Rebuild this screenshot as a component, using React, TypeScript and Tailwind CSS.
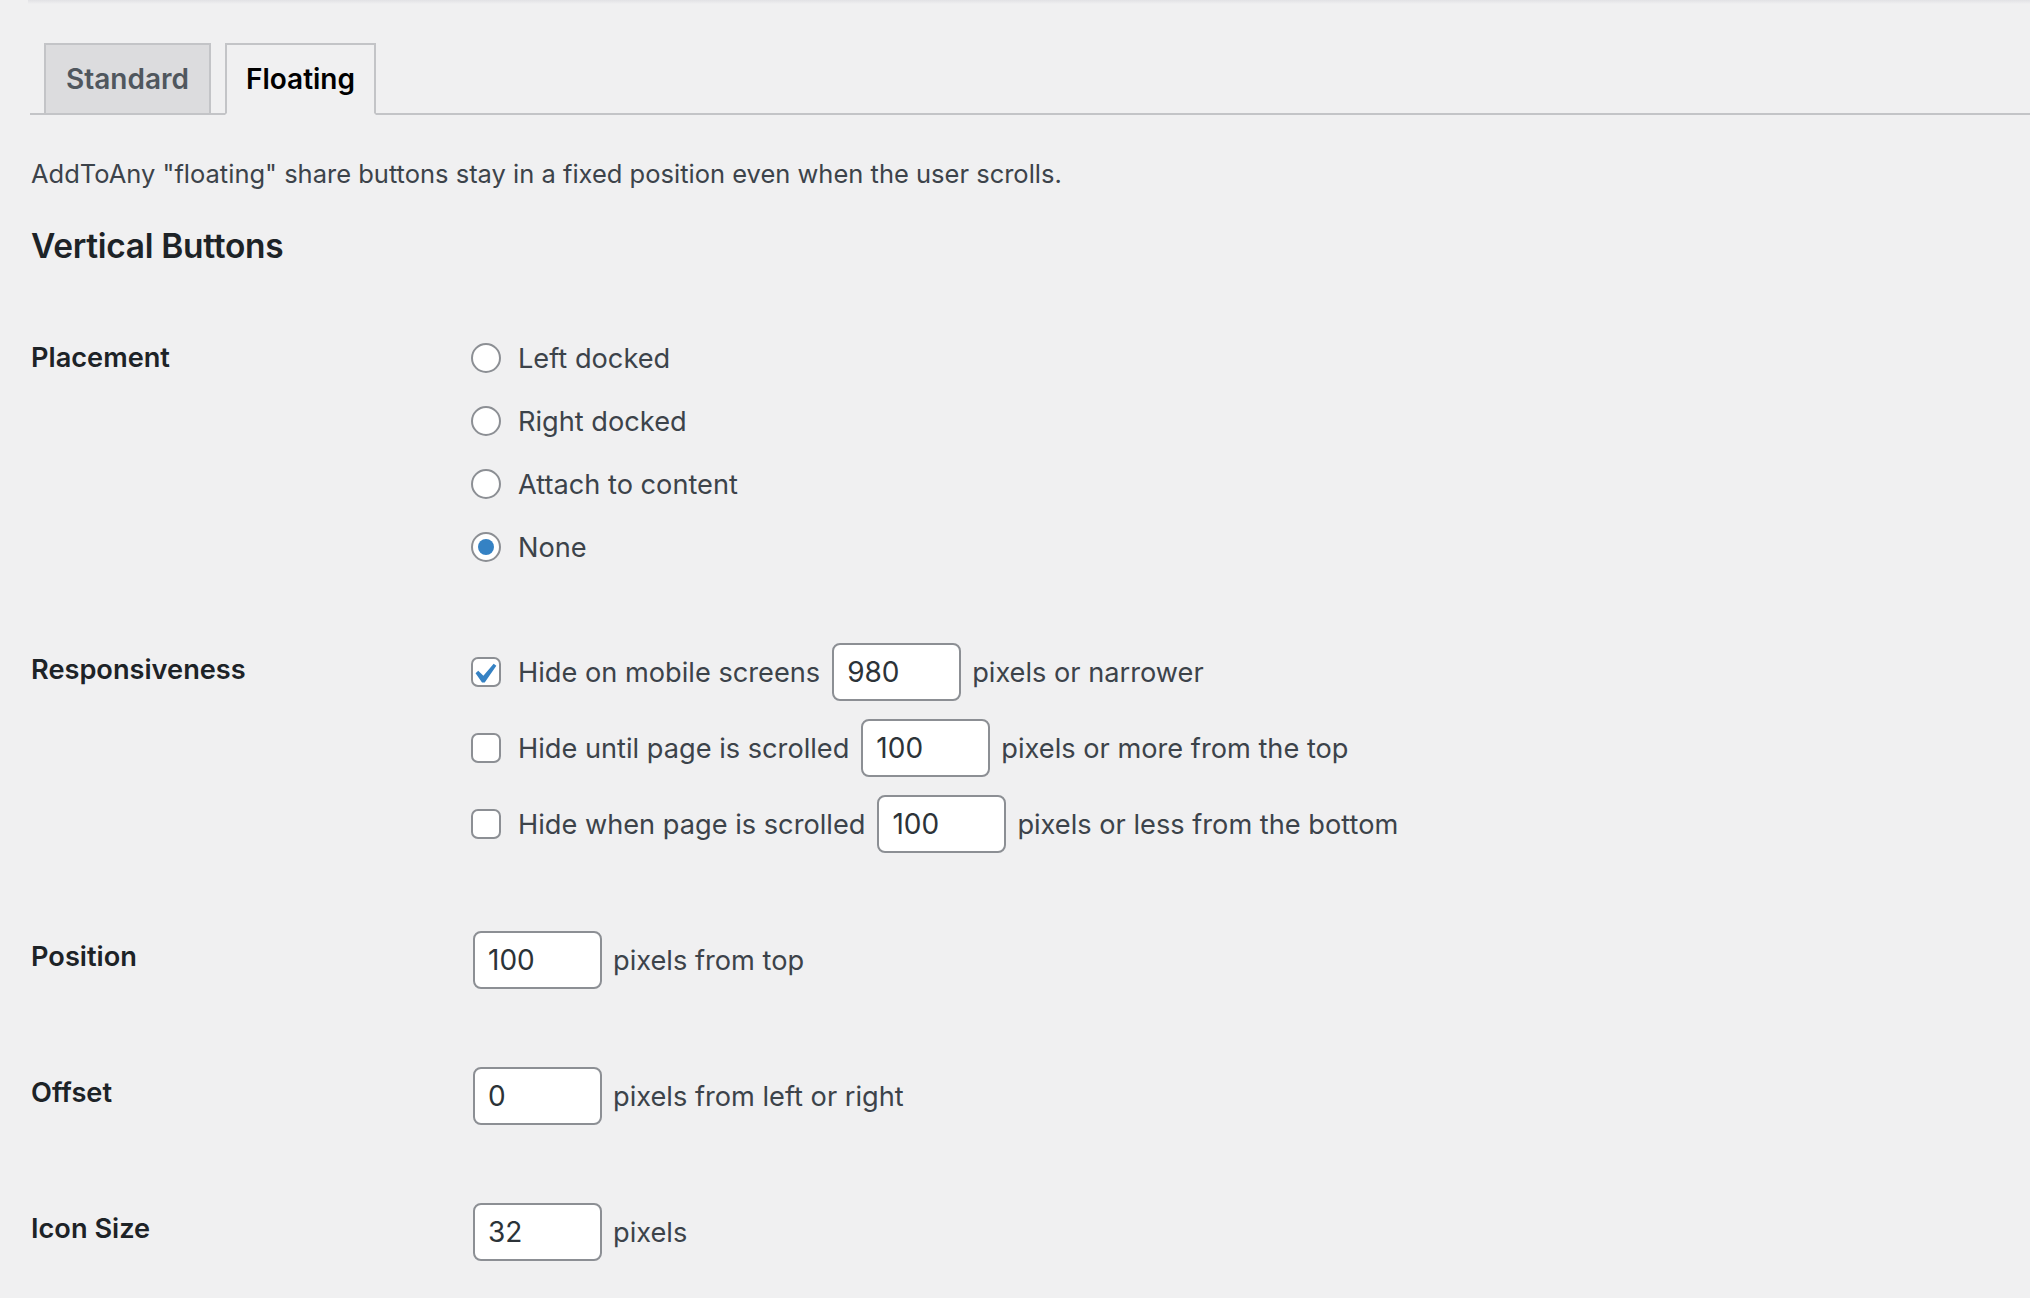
import React from 'react';

const Radio = ({ checked, label }: { checked?: boolean; label: string }) => (
  <label className="flex h-[63px] items-center">
    <span className="flex h-[30px] w-[30px] items-center justify-center rounded-full border-2 border-[#8c8f94] bg-white">
      {checked && <span className="h-[16px] w-[16px] rounded-full bg-[#3582c4]" />}
    </span>
    <span className="ml-[17px] pt-[3px]">{label}</span>
  </label>
);

const Checkbox = ({ checked }: { checked?: boolean }) => (
  <span className="relative h-[30px] w-[30px] shrink-0 rounded-[7px] border-2 border-[#8c8f94] bg-white">
    {checked && (
      <svg viewBox="0 0 20 20" className="absolute left-[-9px] top-[-5px] h-[40px] w-[40px]">
        <path d="M14.83 4.89l1.34.94-5.81 8.38H9.02L5.78 9.67l1.34-1.25 2.57 2.4z" fill="#3582c4" />
      </svg>
    )}
  </span>
);

const NumberInput = ({ value }: { value: string }) => (
  <input
    type="text"
    defaultValue={value}
    className="h-[58px] w-[129px] rounded-[8px] border-2 border-[#8c8f94] bg-white px-[13px] text-[28px] text-[#2c3338] outline-none"
  />
);

const CheckRow = ({ checked, before, value, after }: { checked?: boolean; before: string; value: string; after: string }) => (
  <div className="flex h-[76px] items-center">
    <Checkbox checked={checked} />
    <span className="ml-[17px] mr-[12px] pt-[3px]">{before}</span>
    <NumberInput value={value} />
    <span className="ml-[11px] pt-[3px]">{after}</span>
  </div>
);

const Label = ({ children, h }: { children: React.ReactNode; h: string }) => (
  <div className={`w-[440px] shrink-0 font-semibold text-[#1d2327] ${h}`}>{children}</div>
);

const App: React.FC = () => {
  return (
    <div className="min-h-screen bg-[#f0f0f1] font-['Inter',sans-serif] text-[#3c434a]">
      {/* shadow from the box above */}
      <div className="ml-[28px] h-[4px] bg-gradient-to-b from-[#e2e2e5] to-[#f0f0f1]" />

      <div className="pl-[30px]">
        {/* Tabs */}
        <div className="mt-[39px] flex gap-[14px] border-b-2 border-[#c3c4c7] pl-[14px]">
          <div className="-mb-[2px] flex h-[72px] items-center border-2 border-[#c3c4c7] bg-[#dcdcde] px-[20px] text-[28px] font-semibold text-[#50575e]">
            Standard
          </div>
          <div className="-mb-[2px] flex h-[72px] items-center border-2 border-b-[#f0f0f1] border-[#c3c4c7] bg-[#f0f0f1] px-[19px] text-[28px] font-semibold text-black">
            Floating
          </div>
        </div>

        <div className="pl-[1px]">
          <p className="mt-[39px] text-[25.5px] leading-[40px]">
            AddToAny "floating" share buttons stay in a fixed position even when the user scrolls.
          </p>

          <h2 className="mt-[30px] text-[33.5px] font-semibold leading-[44px] tracking-[-0.3px] text-[#1d2327]">Vertical Buttons</h2>

          <div className="text-[27.2px]">
            {/* Placement */}
            <div className="mt-[58px] flex">
              <Label h="h-[63px] leading-[63px]">Placement</Label>
              <div className="flex flex-col">
                <Radio label="Left docked" />
                <Radio label="Right docked" />
                <Radio label="Attach to content" />
                <Radio label="None" checked />
              </div>
            </div>

            {/* Responsiveness */}
            <div className="mt-[56px] flex">
              <Label h="h-[76px] leading-[72px]">Responsiveness</Label>
              <div className="flex flex-col">
                <CheckRow checked before="Hide on mobile screens" value="980" after="pixels or narrower" />
                <CheckRow before="Hide until page is scrolled" value="100" after="pixels or more from the top" />
                <CheckRow before="Hide when page is scrolled" value="100" after="pixels or less from the bottom" />
              </div>
            </div>

            {/* Position */}
            <div className="mt-[60px] flex">
              <Label h="h-[76px] leading-[70px]">Position</Label>
              <div className="flex h-[76px] items-center pl-[2px]">
                <NumberInput value="100" />
                <span className="ml-[11px] pt-[3px]">pixels from top</span>
              </div>
            </div>

            {/* Offset */}
            <div className="mt-[60px] flex">
              <Label h="h-[76px] leading-[70px]">Offset</Label>
              <div className="flex h-[76px] items-center pl-[2px]">
                <NumberInput value="0" />
                <span className="ml-[11px] pt-[3px]">pixels from left or right</span>
              </div>
            </div>

            {/* Icon Size */}
            <div className="mt-[60px] flex">
              <Label h="h-[76px] leading-[70px]">Icon Size</Label>
              <div className="flex h-[76px] items-center pl-[2px]">
                <NumberInput value="32" />
                <span className="ml-[11px] pt-[3px]">pixels</span>
              </div>
            </div>
          </div>
        </div>
      </div>
    </div>
  );
};

export default App;
